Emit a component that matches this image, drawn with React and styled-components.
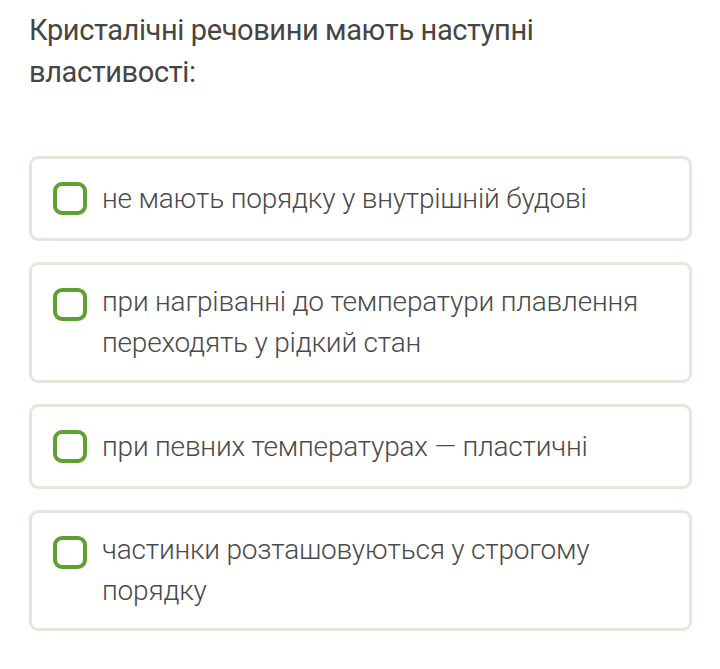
import React from "react";
import styled, { createGlobalStyle } from "styled-components";

const Global = createGlobalStyle`
  html, body { margin: 0; padding: 0; background: #ffffff; }
  body { font-family: Roboto, "Noto Sans", sans-serif; }
`;

const Page = styled.div`
  padding: 9px 28px 0 29px;
  width: 663px;
`;

const Title = styled.h1`
  margin: 0 0 63px 0;
  font-family: Roboto, "Noto Sans", sans-serif;
  font-weight: 400;
  font-size: 29px;
  line-height: 42px;
  color: #454545;
  letter-spacing: -0.4px;
`;

const List = styled.div`
  display: flex;
  flex-direction: column;
  gap: 21px;
`;

const Option = styled.label`
  display: flex;
  align-items: flex-start;
  gap: 15px;
  padding: 16px 24px 17px 21px;
  border: 3px solid #e1ead8;
  border-radius: 9px;
  background: #fff;
  cursor: pointer;
`;

const Box = styled.span`
  flex: none;
  box-sizing: border-box;
  width: 34px;
  height: 33px;
  margin-top: 7px;
  border: 4px solid #5ea132;
  border-radius: 9px;
  background: #fff;
`;

const Text = styled.span`
  display: flex;
  align-items: center;
  font-family: Roboto, "Noto Sans", sans-serif;
  font-weight: 300;
  font-size: 28px;
  line-height: 41px;
  min-height: 46px;
  color: #4a4a4a;
  letter-spacing: -0.2px;
`;

const options = [
  "не мають порядку у внутрішній будові",
  "при нагріванні до температури плавлення переходять у рідкий стан",
  "при певних температурах — пластичні",
  "частинки розташовуються у строгому порядку",
];

export default function App() {
  return (
    <>
      <Global />
      <Page>
        <Title>Кристалічні речовини мають наступні властивості:</Title>
        <List>
          {options.map((o) => (
            <Option key={o}>
              <Box />
              <Text>{o}</Text>
            </Option>
          ))}
        </List>
      </Page>
    </>
  );
}
